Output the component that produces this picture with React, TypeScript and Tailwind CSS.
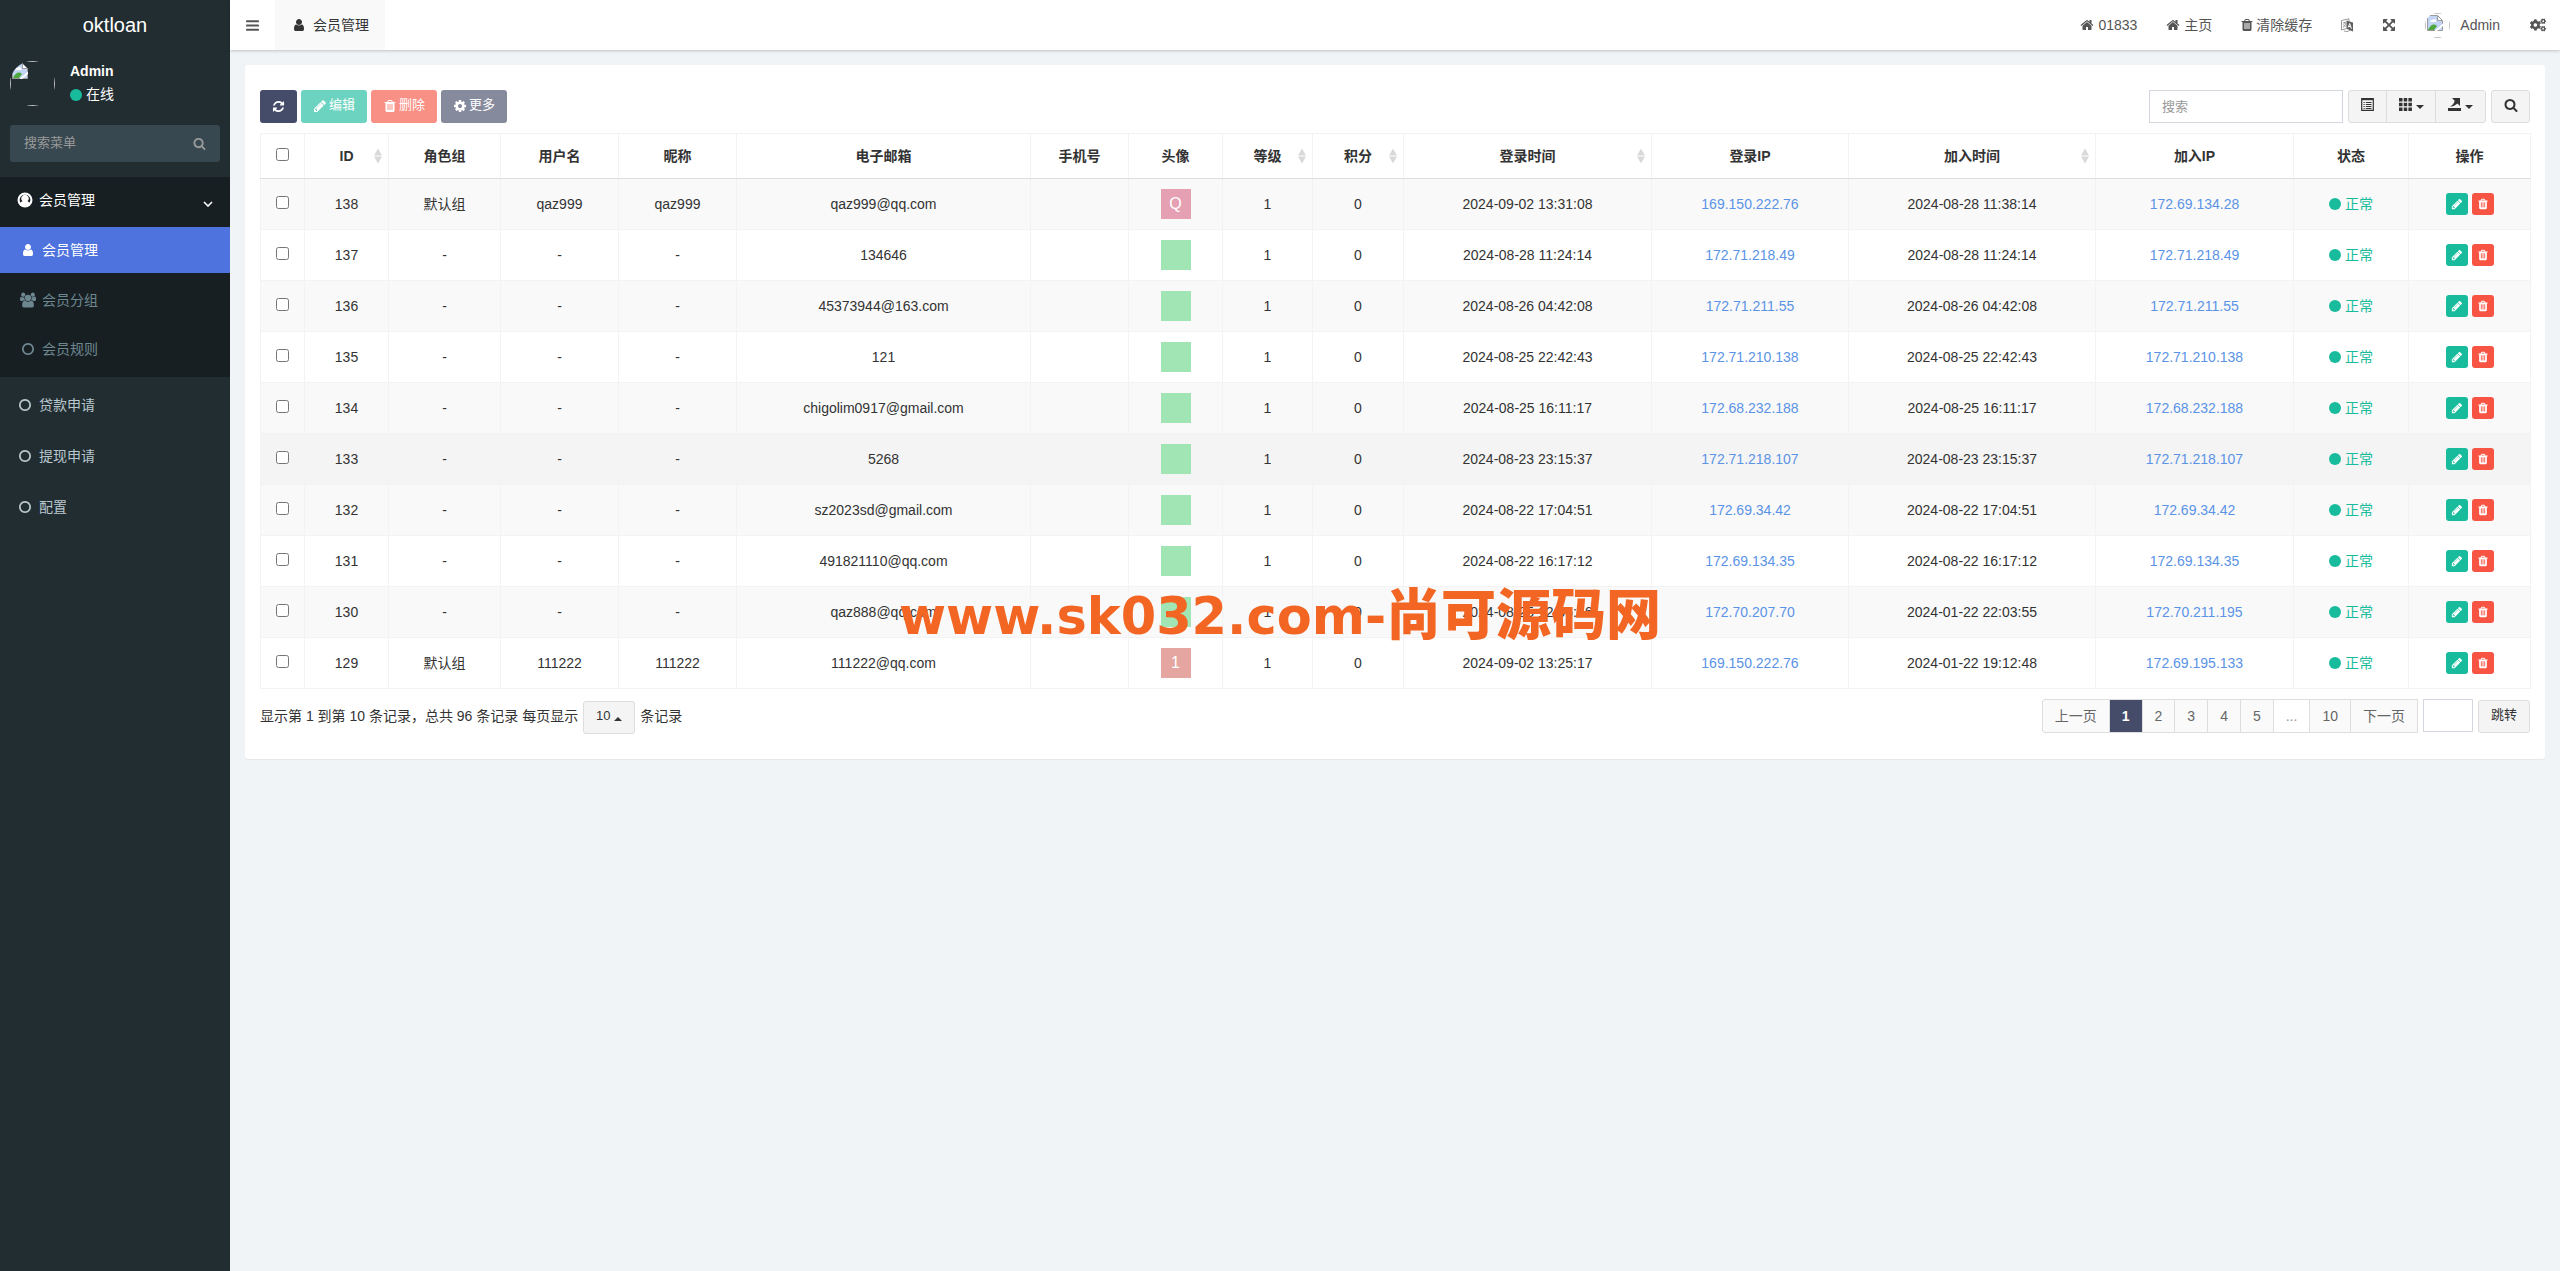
import type { ReactNode } from "react";
import { FaCogs } from "react-icons/fa";

const paths: Record<string, string> = {
  refresh: "M1639 1056q0 5-1 7-64 268-268 434.5t-478 166.5q-146 0-282.5-55t-243.5-157l-129 129q-19 19-45 19t-45-19-19-45v-448q0-26 19-45t45-19h448q26 0 45 19t19 45-19 45l-137 137q71 66 161 102t187 36q134 0 250-65t186-179q11-17 53-117 8-23 30-23h192q13 0 22.5 9.5t9.5 22.5zm25-800v448q0 26-19 45t-45 19h-448q-26 0-45-19t-19-45 19-45l138-138q-148-137-349-137-134 0-250 65t-186 179q-11 17-53 117-8 23-30 23h-199q-13 0-22.5-9.5t-9.5-22.5v-7q65-268 270-434.5t480-166.5q146 0 284 55.5t245 156.5l130-129q19-19 45-19t45 19 19 45z",
  pencil: "M491 1536l91-91-235-235-91 91v107h128v128h107zm523-928q0-22-22-22-10 0-17 7l-542 542q-7 7-7 17 0 22 22 22 10 0 17-7l542-542q7-7 7-17zm-54-192l416 416-832 832h-416v-416zm683 96q0 53-37 90l-166 166-416-416 166-165q36-38 90-38 53 0 91 38l235 234q37 39 37 91z",
  trash: "M704 1376v-704q0-14-9-23t-23-9h-64q-14 0-23 9t-9 23v704q0 14 9 23t23 9h64q14 0 23-9t9-23zm256 0v-704q0-14-9-23t-23-9h-64q-14 0-23 9t-9 23v704q0 14 9 23t23 9h64q14 0 23-9t9-23zm256 0v-704q0-14-9-23t-23-9h-64q-14 0-23 9t-9 23v704q0 14 9 23t23 9h64q14 0 23-9t9-23zm-544-992h448l-48-117q-7-9-17-11h-317q-10 2-17 11zm928 32v64q0 14-9 23t-23 9h-96v948q0 83-47 143.5t-113 60.5h-832q-66 0-113-58.5t-47-141.5v-952h-96q-14 0-23-9t-9-23v-64q0-14 9-23t23-9h309l70-167q15-37 54-63t79-26h320q40 0 79 26t54 63l70 167h309q14 0 23 9t9 23z",
  cog: "M1152 896q0-106-75-181t-181-75-181 75-75 181 75 181 181 75 181-75 75-181zm512-109v222q0 12-8 23t-20 13l-185 28q-19 54-39 91 35 50 107 138 10 12 10 25t-9 23q-27 37-99 108t-94 71q-12 0-26-9l-138-108q-44 23-91 38-16 136-29 186-7 28-36 28h-222q-14 0-24.5-8.5t-11.5-21.5l-28-184q-49-16-90-37l-141 107q-10 9-25 9-14 0-25-11-126-114-165-168-7-10-7-23 0-12 8-23 15-21 51-66.5t54-70.5q-27-50-41-99l-183-27q-13-2-21-12.5t-8-23.5v-222q0-12 8-23t19-13l186-28q14-46 39-92-40-57-107-138-10-12-10-24 0-10 9-23 26-36 98.5-107.5t94.5-71.5q13 0 26 10l138 107q44-23 91-38 16-136 29-186 7-28 36-28h222q14 0 24.5 8.5t11.5 21.5l28 184q49 16 90 37l142-107q9-9 24-9 13 0 25 10 129 119 165 170 7 8 7 22 0 12-8 23-15 21-51 66.5t-54 70.5q26 50 41 98l183 28q13 2 21 12.5t8 23.5z",
  user: "M1536 1399q0 109-62.5 187t-150.5 78h-854q-88 0-150.5-78t-62.5-187q0-85 8.5-160.5t31.5-152 58.5-131 94-89 134.5-34.5q131 128 313 128t313-128q76 0 134.5 34.5t94 89 58.5 131 31.5 152 8.5 160.5zm-256-887q0 159-112.5 271.5t-271.5 112.5-271.5-112.5-112.5-271.5 112.5-271.5 271.5-112.5 271.5 112.5 112.5 271.5z",
  users: "M593 896q-162 5-265 128h-134q-82 0-138-40.5t-56-118.5q0-353 124-353 6 0 43.5 21t97.5 42.5 119 21.5q67 0 133-23-5 37-5 66 0 159 90 299zm1071 637q0 120-73 189.5t-194 69.5h-874q-121 0-194-69.5t-73-189.5q0-53 3.5-103.5t14-109 26.5-108.5 43-97.5 62-81 85.5-53.5 111.5-20q10 0 43 21.5t73 48 107 48 135 21.5 135-21.5 107-48 73-48 43-21.5q61 0 111.5 20t85.5 53.5 62 81 43 97.5 26.5 108.5 14 109 3.5 103.5zm-1024-1277q0 106-75 181t-181 75-181-75-75-181 75-181 181-75 181 75 75 181zm704 384q0 159-112.5 271.5t-271.5 112.5-271.5-112.5-112.5-271.5 112.5-271.5 271.5-112.5 271.5 112.5 112.5 271.5zm576 225q0 78-56 118.5t-138 40.5h-134q-103-123-265-128 90-140 90-299 0-29-5-66 66 23 133 23 59 0 119-21.5t97.5-42.5 43.5-21q124 0 124 353zm-128-609q0 106-75 181t-181 75-181-75-75-181 75-181 181-75 181 75 75 181z",
  home: "M1472 992v480q0 26-19 45t-45 19h-384v-384h-256v384h-384q-26 0-45-19t-19-45v-480q0-1 .5-3t.5-3l575-474 575 474q1 2 1 6zm223-69l-62 74q-8 9-21 11h-3q-13 0-21-7l-692-577-692 577q-12 8-24 7-13-2-21-11l-62-74q-8-10-7-23.5t11-21.5l719-599q32-26 76-26t76 26l244 204v-195q0-14 9-23t23-9h192q14 0 23 9t9 23v408l219 182q10 8 11 21.5t-7 23.5z",
  circle: "M896 352q-148 0-273 73t-198 198-73 273 73 273 198 198 273 73 273-73 198-198 73-273-73-273-198-198-273-73zm768 544q0 209-103 385.5t-279.5 279.5-385.5 103-385.5-103-279.5-279.5-103-385.5 103-385.5 279.5-279.5 385.5-103 385.5 103 279.5 279.5 103 385.5z",
  bars: "M192 1280h1408q64 0 64 64v128q0 64-64 64h-1408q-64 0-64-64v-128q0-64 64-64zm0-512h1408q64 0 64 64v128q0 64-64 64h-1408q-64 0-64-64v-128q0-64 64-64zm0-512h1408q64 0 64 64v128q0 64-64 64h-1408q-64 0-64-64v-128q0-64 64-64z",
  search: "M1216 832q0-185-131.5-316.5t-316.5-131.5-316.5 131.5-131.5 316.5 131.5 316.5 316.5 131.5 316.5-131.5 131.5-316.5zm512 832q0 52-38 90t-90 38q-54 0-90-38l-343-342q-179 124-399 124-143 0-273.5-55.5t-225-150-150-225-55.5-273.5 55.5-273.5 150-225 225-150 273.5-55.5 273.5 55.5 225 150 150 225 55.5 273.5q0 220-124 399l343 343q37 37 37 90z",
  expand: "M1411 541l-355 355 355 355 144-144q29-31 70-14 39 17 39 59v448q0 26-19 45t-45 19h-448q-42 0-59-40-17-39 14-69l144-144-355-355-355 355 144 144q31 30 14 69-17 40-59 40h-448q-26 0-45-19t-19-45v-448q0-42 40-59 39-17 69 14l144 144 355-355-355-355-144 144q-19 19-45 19-12 0-24-5-40-17-40-59v-448q0-26 19-45t45-19h448q42 0 59 40 17 39-14 69l-144 144 355 355 355-355-144-144q-31-30-14-69 17-40 59-40h448q26 0 45 19t19 45v448q0 42-39 59-13 5-25 5-26 0-45-19z",
};

function Icon({ name, className = "size-3.5" }: { name: string; className?: string }) {
  return (
    <svg viewBox={name === "users" ? "0 0 1920 1792" : "0 0 1792 1792"} fill="currentColor" className={`shrink-0 ${className}`} aria-hidden="true">
      <path d={paths[name]} />
    </svg>
  );
}

// Round avatar whose image failed to load: the square frame is cut by the circle
function BrokenAvatar({ className }: { className: string }) {
  return (
    <span className={`block shrink-0 overflow-hidden rounded-full ${className}`}>
      <span className="block size-full border border-[#c0c0c0] p-px">
        <svg viewBox="0 0 16 16" className="size-4" aria-hidden="true">
          <path d="M.500 .500h10l5 5v10H.500z" fill="#c3d5f5" stroke="#9a9a9a" />
          <path d="M3 7c0-2 2-2 2.500-2 1.500-2 4-1 4 2z" fill="#fff" />
          <path d="M1 15c2-5 6-7 9-4l-3 4z" fill="#4fa83d" />
          <path d="M10.500 .500v5h5z" fill="#fff" stroke="#9a9a9a" />
          <path d="M16 8.500L7.500 16H10l6-5z" fill="#fff" />
        </svg>
      </span>
    </span>
  );
}

function Caret({ up }: { up?: boolean }) {
  return (
    <svg viewBox="0 0 8 4" className="mt-1 h-1 w-2" fill="currentColor" aria-hidden="true">
      <path d={up ? "M0 4h8L4 0z" : "M0 0h8L4 4z"} />
    </svg>
  );
}

function SortArrows() {
  return (
    <svg viewBox="0 0 8 15" className="absolute right-1.5 top-1/2 h-[15px] w-2 -translate-y-1/2" fill="#d9d9d9" aria-hidden="true">
      <path d="M4 0l4 7H0zM4 15l4-7H0z" />
    </svg>
  );
}

const columns = [
  { title: "ID", width: "w-[84px]", sort: true },
  { title: "角色组", width: "w-[112px]" },
  { title: "用户名", width: "w-[118px]" },
  { title: "昵称", width: "w-[118px]" },
  { title: "电子邮箱", width: "w-[294px]" },
  { title: "手机号", width: "w-[98px]" },
  { title: "头像", width: "w-[94px]" },
  { title: "等级", width: "w-[90px]", sort: true },
  { title: "积分", width: "w-[91px]", sort: true },
  { title: "登录时间", width: "w-[248px]", sort: true },
  { title: "登录IP", width: "w-[197px]" },
  { title: "加入时间", width: "w-[247px]", sort: true },
  { title: "加入IP", width: "w-[198px]" },
  { title: "状态", width: "w-[115px]" },
  { title: "操作", width: "w-[122px]" },
];

type Member = {
  id: number;
  group?: string;
  name?: string;
  email: string;
  letter?: string;
  loginTime: string;
  loginIp: string;
  joinTime: string;
  joinIp: string;
};

const members: Member[] = [
  { id: 138, group: "默认组", name: "qaz999", email: "qaz999@qq.com", letter: "Q", loginTime: "2024-09-02 13:31:08", loginIp: "169.150.222.76", joinTime: "2024-08-28 11:38:14", joinIp: "172.69.134.28" },
  { id: 137, email: "134646", loginTime: "2024-08-28 11:24:14", loginIp: "172.71.218.49", joinTime: "2024-08-28 11:24:14", joinIp: "172.71.218.49" },
  { id: 136, email: "45373944@163.com", loginTime: "2024-08-26 04:42:08", loginIp: "172.71.211.55", joinTime: "2024-08-26 04:42:08", joinIp: "172.71.211.55" },
  { id: 135, email: "121", loginTime: "2024-08-25 22:42:43", loginIp: "172.71.210.138", joinTime: "2024-08-25 22:42:43", joinIp: "172.71.210.138" },
  { id: 134, email: "chigolim0917@gmail.com", loginTime: "2024-08-25 16:11:17", loginIp: "172.68.232.188", joinTime: "2024-08-25 16:11:17", joinIp: "172.68.232.188" },
  { id: 133, email: "5268", loginTime: "2024-08-23 23:15:37", loginIp: "172.71.218.107", joinTime: "2024-08-23 23:15:37", joinIp: "172.71.218.107" },
  { id: 132, email: "sz2023sd@gmail.com", loginTime: "2024-08-22 17:04:51", loginIp: "172.69.34.42", joinTime: "2024-08-22 17:04:51", joinIp: "172.69.34.42" },
  { id: 131, email: "491821110@qq.com", loginTime: "2024-08-22 16:17:12", loginIp: "172.69.134.35", joinTime: "2024-08-22 16:17:12", joinIp: "172.69.134.35" },
  { id: 130, email: "qaz888@qq.com", loginTime: "2024-08-25 12:06:46", loginIp: "172.70.207.70", joinTime: "2024-01-22 22:03:55", joinIp: "172.70.211.195" },
  { id: 129, group: "默认组", name: "111222", email: "111222@qq.com", letter: "1", loginTime: "2024-09-02 13:25:17", loginIp: "169.150.222.76", joinTime: "2024-01-22 19:12:48", joinIp: "172.69.195.133" },
];

const avatarColor: Record<string, string> = {
  Q: "bg-[#e5a0b3]",
  "1": "bg-[#e5a5a0]",
};

function Cell({ children }: { children?: ReactNode }) {
  return <td className="border border-[#f3f3f3] p-0">{children}</td>;
}

function Sidebar() {
  return (
    <aside className="w-[230px] shrink-0 bg-[#222d32] text-[#b8c7ce]">
      <a href="#" className="flex h-[50px] items-center justify-center text-xl text-white">oktloan</a>
      <div className="flex items-center gap-[15px] px-2.5 pt-2.5">
        <BrokenAvatar className="size-[45px]" />
        <div className="text-white">
          <p className="font-bold leading-[23px]">Admin</p>
          <a href="#" className="flex items-center gap-1 leading-[23px]"><span className="size-3 rounded-full bg-[#18bc9c]" />在线</a>
        </div>
      </div>
      <form className="mx-2.5 mt-[19px] flex h-[37px] items-center rounded-[3px] bg-[#374850] px-3.5 text-[#999]">
        <input aria-label="搜索菜单" placeholder="搜索菜单" className="min-w-0 flex-1 bg-transparent text-[13px] outline-none placeholder:text-[#999]" />
        <button type="button" aria-label="搜索"><Icon name="search" className="size-[13px]" /></button>
      </form>
      <nav className="mt-[15px]">
        <a href="#" className="flex h-[50px] items-center bg-[#181f23] pb-1 pl-[17px] pr-[17px] text-white">
          <svg viewBox="0 0 16 16" className="size-4" aria-hidden="true">
            <circle cx="8" cy="8" r="7.500" fill="currentColor" />
            <path d="M8 2.600a5.400 5.400 0 0 1 4.600 8.200c-.6-1-1.400-1.500-2.200-1.600a3.600 3.600 0 1 0-4.800 0c-.8.1-1.600.6-2.200 1.600A5.400 5.400 0 0 1 8 2.600z" fill="#181f23" />
            <circle cx="8" cy="6.500" r="2.900" fill="currentColor" />
          </svg>
          <span className="ml-1.5 flex-1">会员管理</span>
          <svg viewBox="0 0 10 6" className="mt-2 h-1.5 w-2.5" fill="none" stroke="currentColor" strokeWidth="1.600" aria-hidden="true"><path d="M1 1l4 4 4-4" /></svg>
        </a>
        <div className="bg-[#181f23] text-[#6d8791]">
          <a href="#" className="flex h-[46px] items-center gap-[7px] bg-[#4e73df] pl-[21px] text-white"><Icon name="user" />会员管理</a>
          <a href="#" className="flex h-[54px] items-center gap-1.5 pl-5"><Icon name="users" className="size-4" />会员分组</a>
          <a href="#" className="flex h-[50px] items-center gap-[7px] pb-1.5 pl-[21px]"><Icon name="circle" />会员规则</a>
        </div>
        <div className="pt-0.5">
          {["贷款申请", "提现申请", "配置"].map(item => (
            <a key={item} href="#" className="flex h-[51px] items-center gap-[7px] pl-[18px]"><Icon name="circle" />{item}</a>
          ))}
        </div>
      </nav>
    </aside>
  );
}

function TopBar() {
  return (
    <header className="relative flex h-[50px] items-center bg-white text-[#555] shadow-[0_1px_3px_rgba(0,0,0,0.2)]">
      <button aria-label="菜单" className="flex h-full w-[45px] items-center justify-center"><Icon name="bars" className="size-[15px]" /></button>
      <a href="#" className="flex h-full items-center gap-[7px] bg-[#f9f9f9] pl-[17px] pr-4 text-[#333]"><Icon name="user" />会员管理</a>
      <nav className="ml-auto flex items-center pr-3.5">
        <a href="#" className="mr-[29px] flex items-center gap-1"><Icon name="home" />01833</a>
        <a href="#" className="mr-7 flex items-center gap-1"><Icon name="home" />主页</a>
        <a href="#" className="mr-7 flex items-center gap-0.5"><Icon name="trash" />清除缓存</a>
        <button aria-label="语言" className="mr-7">
          <svg viewBox="0 0 14 14" className="size-3.5" aria-hidden="true">
            <path d="M1.500 2.500L9 .800V3M1.500 2.500V12l5-1.500M4 13c2 .8 4 .6 6-.8" fill="none" stroke="#999" />
            <path d="M6.500 2.500L13 4.500v9L6.500 10.800z" fill="#5f5f5f" />
            <path d="M3 5l3-1M4.500 4v1.500M5.500 5c0 2-1 3.500-2.700 4.500M3.200 6.500l2.500 2.200" stroke="#888" fill="none" strokeWidth=".8" />
            <path d="M8.200 9.500l1.500-4 1.700 5.200M8.800 8.200l2 .8" stroke="#fff" fill="none" />
          </svg>
        </button>
        <button aria-label="全屏" className="mr-[29px]"><Icon name="expand" /></button>
        <a href="#" className="mr-[30px] flex items-center gap-2.5">
          <BrokenAvatar className="size-[25px]" />
          Admin
        </a>
        <button aria-label="设置"><FaCogs className="size-4" /></button>
      </nav>
    </header>
  );
}

function Toolbar() {
  return (
    <div className="flex items-center justify-between">
      <div className="flex gap-1 text-[13px] text-white">
        <button aria-label="刷新" className="flex h-[33px] w-[37px] items-center justify-center rounded-[3px] bg-[#444c69]"><Icon name="refresh" className="size-[13px]" /></button>
        <button className="flex h-[33px] items-center gap-0.5 rounded-[3px] bg-[#6bd3bf] px-3 pb-0.5"><Icon name="pencil" />编辑</button>
        <button className="flex h-[33px] items-center gap-0.5 rounded-[3px] bg-[#f99086] px-3 pb-0.5"><Icon name="trash" />删除</button>
        <button className="flex h-[33px] items-center gap-0.5 rounded-[3px] bg-[#868a9d] px-3 pb-0.5"><Icon name="cog" />更多</button>
      </div>
      <div className="flex gap-[5px] text-[#333]">
        <input aria-label="搜索" placeholder="搜索" className="h-[33px] w-[194px] border border-[#d2d6de] px-3 text-[13px] outline-none placeholder:text-[#999]" />
        <div className="flex h-[33px] divide-x divide-[#ddd] rounded-[3px] border border-[#ddd] bg-[#f4f4f4]">
          <button aria-label="切换视图" className="flex w-[38px] items-center justify-center pb-1">
            <svg viewBox="0 0 13 13" className="size-[13px]" aria-hidden="true">
              <path d="M.700 .700h11.600v11.600H.700z" fill="none" stroke="currentColor" strokeWidth="1.200" />
              <path d="M1 1h11v1.200H1z" fill="currentColor" />
              <path d="M2.500 4.500h1.200M2.500 6.500h1.200M2.500 8.500h1.200M2.500 10.500h1.200M4.800 4.500h5.700M4.800 6.500h5.700M4.800 8.500h5.700M4.800 10.500h5.700" stroke="currentColor" />
            </svg>
          </button>
          <button aria-label="列" className="flex w-[49px] items-center justify-center gap-1 pb-1">
            <svg viewBox="0 0 13 13" className="size-[13px]" fill="currentColor" aria-hidden="true">
              <path d="M0 0h3.500v3.500H0zM4.700 0h3.500v3.500H4.700zM9.400 0h3.500v3.500H9.400zM0 4.700h3.500v3.500H0zM4.700 4.700h3.500v3.500H4.700zM9.400 4.700h3.500v3.500H9.400zM0 9.400h3.500v3.500H0zM4.700 9.400h3.500v3.500H4.700zM9.400 9.400h3.500v3.500H9.400z" />
            </svg>
            <Caret />
          </button>
          <button aria-label="导出" className="flex w-[49px] items-center justify-center gap-1 pb-1">
            <svg viewBox="0 0 13 13" className="size-[13px]" fill="currentColor" aria-hidden="true">
              <path d="M0 10h13v3H0zM4 0h8v8L9.500 5.500C7.500 7 6 8.500 2 8.500c2.500-1 4-3 4.700-5.800z" />
            </svg>
            <Caret />
          </button>
        </div>
        <button aria-label="普通搜索" className="flex h-[33px] w-[39px] items-center justify-center rounded-[3px] border border-[#ddd] bg-[#f4f4f4] pb-1"><Icon name="search" /></button>
      </div>
    </div>
  );
}

function MemberTable() {
  return (
    <table className="mt-2.5 w-full table-fixed border-collapse text-center">
      <thead>
        <tr className="h-[45px]">
          <th className="w-[44px] border border-[#f3f3f3] border-b-[#ddd] p-0"><input type="checkbox" aria-label="全选" className="mx-auto mb-1 block size-[13px]" /></th>
          {columns.map(c => (
            <th key={c.title} className={`relative border border-[#f3f3f3] border-b-[#ddd] p-0 font-bold ${c.width}`}>
              {c.title}
              {c.sort && <SortArrows />}
            </th>
          ))}
        </tr>
      </thead>
      <tbody>
        {members.map((m, i) => (
          <tr key={m.id} className={`h-[51px] ${m.id === 133 ? "bg-[#f4f4f4]" : i % 2 === 0 ? "bg-[#f9f9f9]" : "bg-white"}`}>
            <Cell><input type="checkbox" aria-label={`选择 ${m.id}`} className="mx-auto mb-1 block size-[13px]" /></Cell>
            <Cell>{m.id}</Cell>
            <Cell>{m.group ?? "-"}</Cell>
            <Cell>{m.name ?? "-"}</Cell>
            <Cell>{m.name ?? "-"}</Cell>
            <Cell>{m.email}</Cell>
            <Cell />
            <Cell>
              <span className={`mx-auto flex size-[30px] items-center justify-center text-base text-white ${m.letter ? avatarColor[m.letter] : "bg-[#a0e5b3]"}`}>{m.letter}</span>
            </Cell>
            <Cell>1</Cell>
            <Cell>0</Cell>
            <Cell>{m.loginTime}</Cell>
            <Cell><a href="#" className="text-[#5b93e6]">{m.loginIp}</a></Cell>
            <Cell>{m.joinTime}</Cell>
            <Cell><a href="#" className="text-[#5b93e6]">{m.joinIp}</a></Cell>
            <Cell>
              <span className="flex items-center justify-center gap-1 text-[#18bc9c]"><span className="size-3 rounded-full bg-[#18bc9c]" />正常</span>
            </Cell>
            <Cell>
              <span className="flex justify-center gap-1 text-white">
                <button aria-label="编辑" className="flex size-[22px] items-center justify-center rounded-[3px] bg-[#18bc9c]"><Icon name="pencil" className="size-3" /></button>
                <button aria-label="删除" className="flex size-[22px] items-center justify-center rounded-[3px] bg-[#f75444]"><Icon name="trash" className="size-3" /></button>
              </span>
            </Cell>
          </tr>
        ))}
      </tbody>
    </table>
  );
}

function Pagination() {
  const pages = ["上一页", "1", "2", "3", "4", "5", "...", "10", "下一页"];
  return (
    <div className="mt-2.5 flex items-start justify-between">
      <div className="flex items-center gap-[5px]">
        <span className="pb-0.5">显示第 1 到第 10 条记录，总共 96 条记录 每页显示</span>
        <button className="mt-0.5 flex h-[33px] w-[52px] items-center justify-center gap-1 rounded-[3px] border border-[#ddd] bg-[#f4f4f4] pb-0.5 text-[13px]">
          10
          <Caret up />
        </button>
        <span className="pb-0.5">条记录</span>
      </div>
      <div className="flex gap-[5px]">
        <div className="flex h-[34px] divide-x divide-[#ddd] rounded-l-[3px] border border-[#ddd] bg-[#fafafa] text-[#666]">
          {pages.map(p => (
            <button key={p} className={`px-3 ${p === "1" ? "bg-[#444c69] font-bold text-white" : p === "..." ? "bg-white text-[#999]" : ""}`}>{p}</button>
          ))}
        </div>
        <input aria-label="页码" className="h-[33px] w-[50px] border border-[#d2d6de] px-2 outline-none" />
        <button className="mt-px h-[33px] rounded-[3px] border border-[#ddd] bg-[#f4f4f4] px-3 pb-0.5 text-[13px]">跳转</button>
      </div>
    </div>
  );
}

export default function App() {
  return (
    <div className="relative flex min-h-screen bg-[#f0f4f7] font-['Liberation_Sans','Noto_Sans_CJK_SC',sans-serif] text-sm text-[#333]">
      <Sidebar />
      <div className="min-w-0 flex-1">
        <TopBar />
        <main className="m-[15px] rounded-[3px] bg-white px-[15px] pb-[25px] pt-[25px] shadow-[0_1px_1px_rgba(0,0,0,0.05)]">
          <Toolbar />
          <MemberTable />
          <Pagination />
        </main>
      </div>
      {/* Site watermark over the table */}
      <div className="pointer-events-none absolute inset-x-0 top-[580px] flex items-baseline justify-center whitespace-nowrap font-['DejaVu_Sans','Noto_Sans_CJK_SC',sans-serif] text-[51px] font-bold leading-[70px] text-[#f26522]">
        <span>www.sk032.com-</span>
        <span className="text-[55px] font-black">尚可源码网</span>
      </div>
    </div>
  );
}
